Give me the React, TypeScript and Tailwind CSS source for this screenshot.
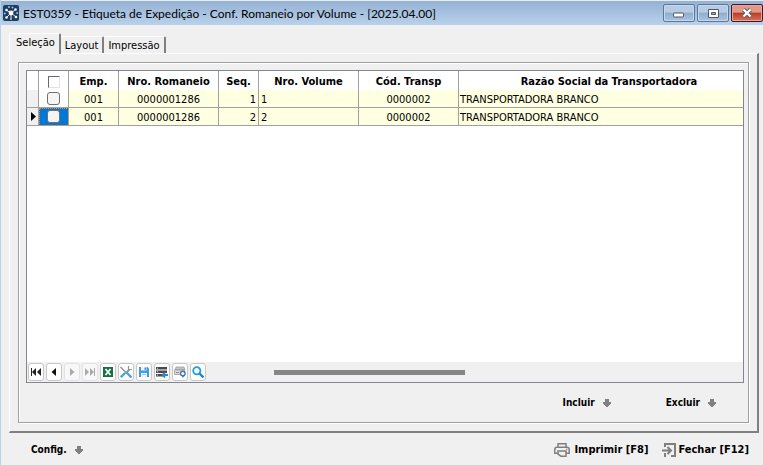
import { useState, type ReactNode } from "react";
import clsx from "clsx";

interface Volume {
  emp: string;
  romaneio: string;
  seq: number;
  volume: string;
  transp: string;
  razao: string;
}

const TABS = ["Seleção", "Layout", "Impressão"];

const VOLUMES: Volume[] = [
  { emp: "001", romaneio: "0000001286", seq: 1, volume: "1", transp: "0000002", razao: "TRANSPORTADORA BRANCO" },
  { emp: "001", romaneio: "0000001286", seq: 2, volume: "2", transp: "0000002", razao: "TRANSPORTADORA BRANCO" },
];

const AppIcon = () => (
  <svg width="16" height="16" viewBox="0 0 16 16" className="shrink-0">
    <rect width="16" height="16" rx="2" fill="#1d3d63" />
    <path
      d="M8 8 4 5.500M8 8l4-3M8 8l-4 4M8 8l4.500 3.500M8 8v5"
      stroke="#fff"
      strokeWidth="1"
      opacity=".85"
    />
    <circle cx="8" cy="8" r="2.400" fill="#fff" />
    <g fill="#fff">
      <circle cx="3.500" cy="5" r="1.300" />
      <circle cx="12.500" cy="4.500" r="1.300" />
      <circle cx="3.500" cy="12.500" r="1.300" />
      <circle cx="13" cy="12" r="1.300" />
    </g>
    <g fill="#b9cbdf">
      <circle cx="8" cy="14" r="1" />
      <circle cx="6" cy="2" r=".9" />
      <circle cx="9.500" cy="2.500" r=".9" />
      <circle cx="1.800" cy="8.500" r=".9" />
      <circle cx="14.200" cy="8" r=".9" />
    </g>
  </svg>
);

const ArrowDownIcon = () => (
  <svg width="8" height="8" viewBox="0 0 8 8" fill="#808080" shapeRendering="crispEdges">
    <path d="M2 0h4v3h2v2H7v1H6v1H5v1H3V7H2V6H1V5H0V3h2z" />
  </svg>
);

const PrinterIcon = () => (
  <svg width="16" height="14" viewBox="0 0 16 14" fill="none" stroke="#7f7f7f" strokeWidth="1.500">
    <path d="M4 4V.8h8V4" />
    <path d="M4 10.300H.8V6.500Q.8 4.300 3 4.300h10q2.200 0 2.200 2.200v3.800H12" />
    <path d="M4 8h8v5.200H7L4 11z" fill="#f0f0f0" />
    <path d="M12 6.300h1.500" strokeWidth="1" />
  </svg>
);

const ExitIcon = () => (
  <svg width="14" height="14" viewBox="0 0 14 14" fill="none" stroke="#7f7f7f" strokeWidth="2">
    <path d="M3 4V1h10v12H9" />
    <path d="M0 7.500h8M5.500 4l3.500 3.500L5.500 11M3 10v4" />
  </svg>
);

const WindowButton = ({ label, close, children }: { label: string; close?: boolean; children: ReactNode }) => (
  <button
    type="button"
    aria-label={label}
    className={clsx(
      "flex h-[18px] w-8 items-center justify-center rounded-xs border",
      close
        ? "border-[#4b1420] bg-linear-to-b from-[#dd9a8a] from-45% via-[#bb3a24] via-50% to-[#d5735a] shadow-[inset_0_0_0_1px_#e2aa9f]"
        : "border-[#5c7699] bg-linear-to-b from-[#b6cce4] from-45% via-[#8eaed0] via-50% to-[#a9c4e0] shadow-[inset_0_0_0_1px_#c6d8eb]",
    )}
  >
    {children}
  </button>
);

const ToolButton = ({ label, disabled, children }: { label: string; disabled?: boolean; children: ReactNode }) => (
  <button
    type="button"
    aria-label={label}
    disabled={disabled}
    className={clsx(
      "flex h-[18px] w-4 items-center justify-center rounded-[3px] border",
      disabled ? "border-[#e3e3e3] bg-[#f8f8f8]" : "border-[#c8c8c8] bg-white",
    )}
  >
    <svg width="12" height="12" viewBox="0 0 12 12" className="shrink-0">
      {children}
    </svg>
  </button>
);

const MenuButton = ({ children }: { children: ReactNode }) => (
  <button type="button" className="flex items-center gap-2 text-[10px] font-bold">
    {children} <ArrowDownIcon />
  </button>
);

const GridToolbar = () => (
  <div className="flex h-5 items-center gap-0.5 bg-[#f0f0f0] pl-px">
    <ToolButton label="Primeiro">
      <path d="M1 2h1v8H1zM6 2v8L2 6zM11 2v8L7 6z" fill="#222" />
    </ToolButton>
    <ToolButton label="Anterior">
      <path d="M8 2v8L3.500 6z" fill="#111" />
    </ToolButton>
    <ToolButton label="Próximo" disabled>
      <path d="M4 2v8l4.500-4z" fill="#aaa" />
    </ToolButton>
    <ToolButton label="Último" disabled>
      <path d="M1 2v8l4-4zM6 2v8l4-4zM10 2h1v8h-1z" fill="#aaa" />
    </ToolButton>
    <ToolButton label="Exportar para Excel">
      <rect x="1" y="1" width="10" height="10" fill="#12733f" />
      <path d="m3.500 3 5 6M8.500 3l-5 6" stroke="#fff" strokeWidth="1.800" />
    </ToolButton>
    <ToolButton label="Ferramentas">
      <path d="m9.500 3.500-4 4" stroke="#8b949b" strokeWidth="1.800" />
      <path d="M8.500 0v3.500H12" stroke="#8b949b" strokeWidth="1.200" fill="none" />
      <path d="m.5 1 6 6" stroke="#8b949b" strokeWidth="1.500" />
      <path d="m6.500 6.500 5 5M5 7 .8 11.200" stroke="#4aa3e0" strokeWidth="2.400" />
    </ToolButton>
    <ToolButton label="Salvar">
      <path d="M1 1h8.500L11 2.500V11H1z" fill="#3f9ee0" />
      <path d="M3 1h5.500v3.500H3zM3 7h6v4H3z" fill="#eef6fc" />
      <path d="M6.500 1.500H8V4H6.500z" fill="#3f9ee0" />
      <path d="M4 8.500h4" stroke="#9fc9ea" />
    </ToolButton>
    <ToolButton label="Restaurar colunas">
      <path d="M0 1h11v2.500H0zM0 4.500h11V7H0zM0 8h7v2.500H0z" fill="#4a4a4a" />
      <path d="M1 2.200h1M1 5.700h1M1 9.200h1" stroke="#ddd" strokeWidth="1" />
      <path d="M12 9H7M9 6.500 6.500 9 9 11.500" stroke="#3488c4" strokeWidth="1.800" fill="none" />
    </ToolButton>
    <ToolButton label="Atualizar">
      <path d="M2 1h8l1 2.500H1z" fill="#c4c4c4" stroke="#9a9a9a" strokeWidth=".7" />
      <path d="M.5 4h10v4.500H.5z" fill="#dcdcdc" stroke="#999" strokeWidth=".8" />
      <path d="M2 6.500h3" stroke="#888" />
      <circle cx="8.800" cy="7.500" r="2.300" fill="#f4f8fc" stroke="#4178b8" strokeWidth="1.400" />
      <path d="m8 9 .5 3 2-2z" fill="#4178b8" />
    </ToolButton>
    <ToolButton label="Localizar">
      <circle cx="4.800" cy="4.800" r="3.600" fill="#f3fbff" stroke="#1ea0dc" strokeWidth="1.800" />
      <path d="m7.500 7.500 4 4" stroke="#1a86d0" strokeWidth="2.400" />
    </ToolButton>
    <div className="flex-1 pl-[66px]">
      <div className="h-[5px] w-[191px] bg-[#868686]" />
    </div>
  </div>
);

const VolumeGrid = () => {
  const [checked, setChecked] = useState<boolean[]>([false, false]);
  const [current, setCurrent] = useState(1);

  const toggle = (index: number) => setChecked(checked.map((c, i) => (i === index ? !c : c)));

  return (
    <div className="flex flex-1 flex-col border border-[#828790] bg-white">
      <div className="flex-1">
        <table className="w-full table-fixed border-separate border-spacing-0">
          <colgroup>
            <col className="w-3" />
            <col className="w-[30px]" />
            <col className="w-[50px]" />
            <col className="w-[100px]" />
            <col className="w-10" />
            <col className="w-[100px]" />
            <col className="w-[100px]" />
            <col />
          </colgroup>
          <thead>
            <tr className="h-[19px] *:border-r *:border-[#a0a0a0] *:px-0 *:pt-0.5 *:pb-0 *:text-center *:font-bold">
              <th />
              <th>
                <input
                  type="checkbox"
                  aria-label="Selecionar todos"
                  className="mx-auto block size-3 appearance-none border border-r-[#e3e3e3] border-b-[#e3e3e3] border-t-[#696969] border-l-[#696969] bg-white checked:bg-[#0078d7]"
                />
              </th>
              <th>Emp.</th>
              <th>Nro. Romaneio</th>
              <th>Seq.</th>
              <th>Nro. Volume</th>
              <th>Cód. Transp</th>
              <th className="border-r-0! pl-4!">Razão Social da Transportadora</th>
            </tr>
          </thead>
          <tbody>
            {VOLUMES.map((v, i) => (
              <tr
                key={v.seq}
                onClick={() => setCurrent(i)}
                className="h-[18px] bg-[#ffffe1] *:border-r *:border-b *:border-[#a0a0a0] *:px-0 *:pt-0.5 *:pb-0"
              >
                <td className="bg-[#f0f0f0] pt-0!">
                  {current === i && (
                    <svg width="5" height="9" viewBox="0 0 5 9" className="ml-1">
                      <path d="M0 0v9l5-4.500z" fill="#000" />
                    </svg>
                  )}
                </td>
                <td
                  className={clsx(
                    "pt-0!",
                    current === i ? "bg-[#0078d7] outline-1 -outline-offset-1 outline-dotted outline-[#ff8728]" : "bg-white",
                  )}
                >
                  <input
                    type="checkbox"
                    aria-label={`Selecionar volume ${v.volume}`}
                    checked={checked[i]}
                    onChange={() => toggle(i)}
                    className="mx-auto block size-[13px] appearance-none rounded-[3px] border border-[#707070] bg-[#f5f5f5] checked:bg-[#0078d7]"
                  />
                </td>
                <td className="text-center">{v.emp}</td>
                <td className="text-center">{v.romaneio}</td>
                <td className="pr-0.5! text-right">{v.seq}</td>
                <td className="pl-0.5!">{v.volume}</td>
                <td className="text-center">{v.transp}</td>
                <td className="border-r-0! pl-px!">{v.razao}</td>
              </tr>
            ))}
          </tbody>
        </table>
      </div>
      <GridToolbar />
    </div>
  );
};

export default function App() {
  const [tab, setTab] = useState(0);

  return (
    <div className="flex min-h-screen flex-col border-l border-[#b9d1ea] bg-[#f0f0f0] font-['DejaVu_Sans_Condensed','DejaVu_Sans',sans-serif] text-[11px] leading-[14px] text-black">
      <header className="flex h-[25px] items-center gap-1 border-t border-[#e8edf3] bg-linear-to-b from-[#95b1d3] to-[#b9d1ea] pl-0.5">
        <AppIcon />
        <h1 className="flex-1 pt-0.5 font-[Lato,sans-serif] text-xs">
          EST0359 - Etiqueta de Expedição - Conf. Romaneio por Volume - [2025.04.00]
        </h1>
        <div className="flex gap-0.5">
          <WindowButton label="Minimizar">
            <svg width="12" height="6" viewBox="0 0 12 6" className="mt-1">
              <rect x=".5" y="1" width="10" height="4" rx="1" fill="#fff" stroke="#535666" />
            </svg>
          </WindowButton>
          <WindowButton label="Restaurar">
            <svg width="11" height="9" viewBox="0 0 11 9">
              <path d="M.5.500h10v8H.5z" fill="#fff" stroke="#535666" />
              <path d="M3.500 3.500h4v2h-4z" fill="#8eaed0" stroke="#535666" />
            </svg>
          </WindowButton>
          <WindowButton label="Fechar janela" close>
            <svg width="12" height="10" viewBox="0 0 12 10">
              <path d="m2.500 1.500 7 7M9.500 1.500l-7 7" stroke="#535666" strokeWidth="4" />
              <path d="m2.500 1.500 7 7M9.500 1.500l-7 7" stroke="#fff" strokeWidth="2.400" />
            </svg>
          </WindowButton>
        </div>
      </header>

      <main className="flex flex-1 flex-col pt-2 pr-1 pl-2">
        <div role="tablist" className="flex items-end">
          {TABS.map((t, i) => (
            <button
              key={t}
              type="button"
              role="tab"
              aria-selected={tab === i}
              onClick={() => setTab(i)}
              className={clsx(
                "rounded-t-xs border-t border-r-2 border-t-white border-r-[#808080] pr-1",
                tab === i ? "relative -mb-px h-[21px] border-l border-l-white bg-[#f0f0f0] pb-0.5 pl-1.5" : "h-[17px] pt-0.5 pl-1",
              )}
            >
              {t}
            </button>
          ))}
        </div>
        <section className="flex flex-1 flex-col border-t border-r-2 border-b-2 border-l border-t-white border-r-[#808080] border-b-[#808080] border-l-white p-2">
          <div className="flex flex-1 flex-col border border-[#a0a0a0] pt-[7px] pr-1 pl-[7px] shadow-[inset_1px_1px_0_#fff,1px_1px_0_#fff]">
            <VolumeGrid />
            <div className="flex h-[39px] items-center justify-end gap-[55px] pr-7">
              <MenuButton>Incluir</MenuButton>
              <MenuButton>Excluir</MenuButton>
            </div>
          </div>
        </section>
      </main>

      <footer className="flex h-8 items-center pt-0.5 pr-3.5 pl-[30px]">
        <MenuButton>Config.</MenuButton>
        <div className="ml-auto flex gap-3.5">
          <button type="button" className="flex items-center gap-1 font-bold">
            <PrinterIcon /> Imprimir [F8]
          </button>
          <button type="button" className="flex items-center gap-0.5 font-bold">
            <ExitIcon /> Fechar [F12]
          </button>
        </div>
      </footer>
    </div>
  );
}
